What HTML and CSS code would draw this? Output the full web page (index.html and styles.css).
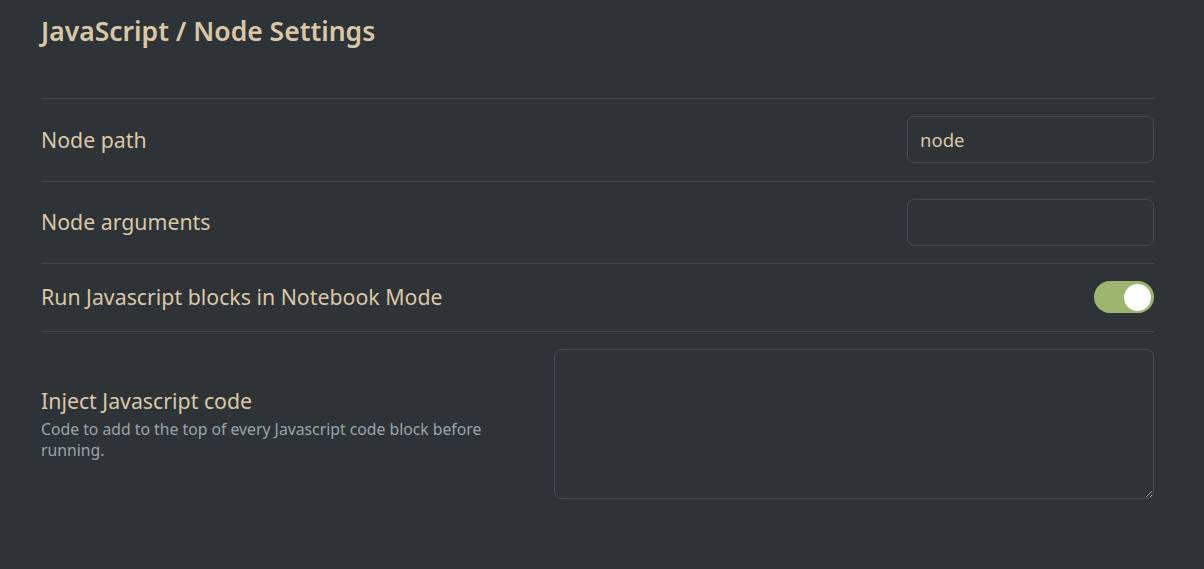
FILE: index.html
```html
<!DOCTYPE html>
<html lang="en">
<head>
<meta charset="utf-8">
<title>JavaScript / Node Settings</title>
<link rel="stylesheet" href="styles.css">
</head>
<body>
<div class="settings">
  <h2 class="settings-title">JavaScript / Node Settings</h2>
  <div class="setting-item">
    <div class="setting-info"><div class="setting-name">Node path</div></div>
    <div class="setting-control"><input class="text-input" type="text" value="node"></div>
  </div>
  <div class="setting-item">
    <div class="setting-info"><div class="setting-name">Node arguments</div></div>
    <div class="setting-control"><input class="text-input" type="text" value=""></div>
  </div>
  <div class="setting-item">
    <div class="setting-info"><div class="setting-name">Run Javascript blocks in Notebook Mode</div></div>
    <div class="setting-control"><div class="toggle is-enabled"><div class="toggle-knob"></div></div></div>
  </div>
  <div class="setting-item setting-item-textarea">
    <div class="setting-info setting-info-narrow">
      <div class="setting-name">Inject Javascript code</div>
      <div class="setting-desc">Code to add to the top of every Javascript code block before running.</div>
    </div>
    <div class="setting-control"><textarea class="code-input"></textarea></div>
  </div>
</div>
</body>
</html>
```

FILE: styles.css
```css
html, body {
  margin: 0;
  padding: 0;
  background: #2e3338;
  height: 100%;
}
body {
  font-family: "Noto Sans", "Open Sans", sans-serif;
  color: #dac7a6;
}
.settings {
  padding: 0 50px 0 41px;
}
.settings-title {
  margin: 0;
  padding-top: 13px;
  height: 98px;
  box-sizing: border-box;
  font-size: 26.5px;
  font-weight: 600;
  line-height: 36px;
  color: #dac7a6;
}
.setting-item {
  display: flex;
  align-items: center;
  justify-content: space-between;
  border-top: 1px solid #43484e;
  padding: 17px 0 17.5px;
}
.setting-item-textarea {
  padding: 17px 0 18px;
}
.setting-info {
  flex: 1 1 auto;
}
.setting-info-narrow {
  flex: 0 0 460px;
}
.setting-name {
  font-size: 21.3px;
  line-height: 28px;
  color: #dac7a6;
}
.setting-desc {
  margin-top: 4px;
  font-size: 15.75px;
  line-height: 21px;
  color: #9ba5a8;
}
.setting-control {
  display: flex;
  justify-content: flex-end;
}
.text-input {
  width: 247px;
  height: 47px;
  box-sizing: border-box;
  background: #2e3338;
  border: 1px solid #464b51;
  border-radius: 7px;
  padding: 0 12px;
  font-family: "Noto Sans", "Open Sans", sans-serif;
  font-size: 18.5px;
  color: #dac7a6;
  outline: none;
}
.toggle {
  width: 60px;
  height: 32px;
  border-radius: 16px;
  background: #9db56e;
  position: relative;
}
.toggle-knob {
  position: absolute;
  top: 3px;
  right: 3px;
  width: 27px;
  height: 27px;
  border-radius: 50%;
  background: #ffffff;
}
.code-input {
  display: block;
  width: 600px;
  height: 150px;
  box-sizing: border-box;
  background: #2e3338;
  border: 1px solid #464b51;
  border-radius: 7px;
  color: #dac7a6;
  outline: none;
  resize: both;
}
```
